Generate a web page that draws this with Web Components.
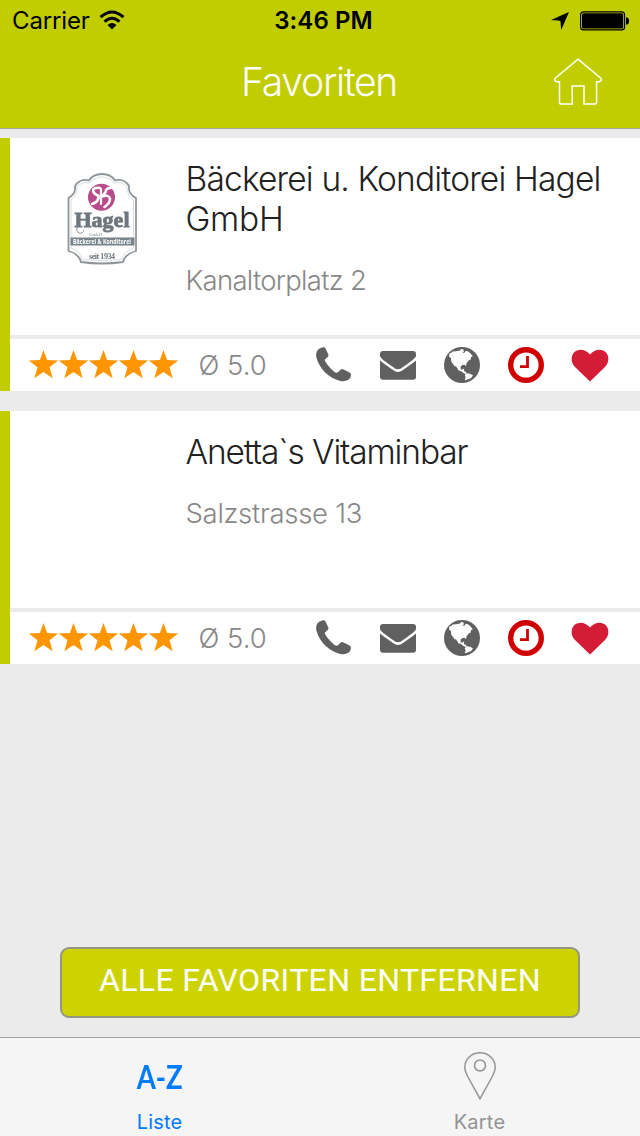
<!DOCTYPE html>
<html lang="de"><head><meta charset="utf-8"><title>Favoriten</title>
<style>body{margin:0;font-family:Inter,"Liberation Sans",sans-serif}</style></head>
<body>
<favorites-app>
  <status-bar slot="top"></status-bar>
  <nav-header slot="top">Favoriten</nav-header>
  <place-card rating="5.0"><bakery-logo slot="logo"></bakery-logo><span slot="name" style="letter-spacing:-.83px">Bäckerei u. Konditorei Hagel <span style="letter-spacing:-.3px">GmbH</span></span><span slot="street" style="letter-spacing:-.72px">Kanaltorplatz 2</span></place-card>
  <place-card rating="5.0"><span slot="name" style="letter-spacing:-1.12px">Anetta`s Vitaminbar</span><span slot="street" style="letter-spacing:-.3px">Salzstrasse 13</span></place-card>
  <clear-button slot="action">ALLE FAVORITEN ENTFERNEN</clear-button>
  <tab-bar slot="bottom"></tab-bar>
</favorites-app>
<script>
const define=(name,html,setup)=>customElements.define(name,class extends HTMLElement{
  constructor(){super();this.attachShadow({mode:'open'}).innerHTML=html;}
  connectedCallback(){if(setup)setup(this);}
});

define('app-icon',`<style>:host{display:block;width:36px;height:36px}svg{display:block;width:100%;height:100%;overflow:visible}</style><svg viewBox="0 0 36 36"></svg>`,el=>{
  const icons={
    phone:'<path fill="#606060" d="M3.1 1.7C4.7.7 7.6-.1 8.4.2 9.6.8 10.3 3.2 11.3 5.3 11.9 6.5 12.8 7.9 12.4 8.9 12 10.2 8.7 12 8.8 13.2 8.9 15 15.2 22.8 19.6 25.6 22.1 27 23.8 22.5 25.9 22.1 27 22 33.5 25.5 34.6 26.4 35.4 27.2 34.7 30.4 33.6 31.8 31.7 33.8 27.6 34.7 24.2 33.9 13 31.1 3.3 21.8.4 10.5-.4 6.8.8 3.1 3.1 1.7Z"/>',
    mail:'<path fill="#606060" d="M3 4H33Q36 4 36 7V9C36 11 30 15 23 20Q18 24.7 13 20C6 15 0 11 0 9V7Q0 4 3 4Z"/><path fill="#606060" d="M0 13.6Q1 14.8 13 23 18 27 23 23 35 14.8 36 13.6V29.7Q36 32.7 33 32.7H3Q0 32.7 0 29.7Z"/>',
    globe:'<circle cx="18" cy="18" r="18" fill="#606060"/><path fill="#fff" d="M5 9.5 5.4 6.4 7.5 5.7 8.5 4.6 12 4.2 16 3.6 16.8 2.3 19 2 20 4.2 18.6 5.4 20.2 6 21.8 3.8 24.4 4.6 27 7 28.8 9.3 26.6 10.6 27 12.3 25 13.2 22.6 16 22 19.2 20.8 17.8 18.5 18 16.6 19.6 16.8 22.4 18.6 22.6 20.2 21.2 19.9 24 22.2 25 22.4 27.4 19.5 26 17.2 24.2 14.2 23.2 13.4 21.2 11.5 18.7 11.2 20 9 17 7.2 14.6 7 11.3ZM21.6 27.2 23.2 26.2 26 26.8 29 28.3 27.2 31 23.6 32.6 20.8 33.2 21.6 30.3 20.8 28.6Z"/>',
    clock:'<circle cx="18" cy="18" r="15.3" fill="none" stroke="#d00000" stroke-width="5.4"/><path fill="none" stroke="#d00000" stroke-width="2.8" d="M19.5 9V19.6H12"/>',
    heart:'<path fill="#d41c37" d="M18 34.4 3 20C-1.2 16-1.4 9 2 5.5 6 1.4 13.5 2 18 7.6 22.5 2 30 1.4 34 5.5 37.4 9 37.2 16 33 20Z"/>',
    star:'<path fill="#ff9500" d="M15 0 18.6 10.1 29.7 10.5 21 17.2 24.2 28.2 15 21.9 5.8 28.2 9 17.2.3 10.5 11.4 10.1Z"/>'
  };
  const n=el.getAttribute('name');
  const svg=el.shadowRoot.querySelector('svg');
  svg.setAttribute('viewBox',n==='star'?'.5 0 30 30':'0 0 36 36');
  svg.innerHTML=icons[n];
});

define('status-bar',`<style>:host{display:grid;grid-template-columns:1fr auto 1fr;align-items:center;height:40px;padding:1px 10px 0 12px;font-size:24px;line-height:40px;box-sizing:border-box}
.l,.r{display:flex;align-items:center}.r{justify-content:flex-end}.l span{letter-spacing:-.15px}.t{font-weight:600;padding-left:5px;letter-spacing:.1px}.wifi{margin:-2px 0 0 9.5px}.batt{margin-left:11px}.r svg{margin-top:-1px}svg{display:block}</style>
<div class="l"><span>Carrier</span><svg class="wifi" width="26" height="20" viewBox="0 0 26 20"><g fill="none" stroke="#000" stroke-width="3"><path d="M1.5 7.2Q13-3.2 24.5 7.2"/><path d="M5.5 11.7Q13 4.8 20.5 11.7"/></g><path d="M8.5 15Q13 11 17.5 15L13 19.5Z"/></svg></div>
<div class="t">3:46 PM</div>
<div class="r"><svg width="18" height="18" viewBox="0 0 18 18"><path d="M18 0 10.2 18 9.4 8.8 0 7.9Z"/></svg><svg class="batt" width="50" height="20" viewBox="0 0 50 20"><rect x=".6" y=".9" width="44" height="18" rx="3" fill="none" stroke="#000" stroke-width="1.1"/><rect x="2" y="2.3" width="41.2" height="15.2" rx="1.6"/><path d="M46 6.5H47Q49 6.8 49 10T47 13.5H46Z"/></svg></div>`);

define('nav-header',`<style>:host{display:grid;grid-template-columns:90px 1fr 90px;align-items:center;height:88px;color:#fff;font-size:39px;font-weight:300}
.title{text-align:center;letter-spacing:-1.25px;padding:0 2px 5px 0}svg{display:block;margin:0 0 4px 4px}</style>
<span></span><div class="title"><slot></slot></div><svg width="48" height="48" viewBox="0 0 48 48" fill="none" stroke="#fff" stroke-width="1.5"><path d="M24 1.2 46.5 20Q48.7 22.8 45 23.8H42.6V44.2Q42.6 46 41 46H30V28H18.2V46H7.2Q5.5 46 5.5 44.2V23.8H3Q-.7 22.8 1.5 20Z"/></svg>`);

define('bakery-logo',`<style>:host{display:block;width:110px;height:120px}svg{display:block;filter:blur(.5px)}</style>
<svg width="110" height="120" viewBox="0 0 110 120"><path d="M25 26Q30 18 39 20.5 43 14 52 14 61 14 65 20.5 74 18 79 26 78 34 86 38V91Q75 94 73 102 63 103.5 52 103.5 41 103.5 31 102 29 94 18.5 91V38Q26 34 25 26Z" fill="#fff" stroke="#8f969a" stroke-width="1.8"/><path d="M27 27Q32 21 40 23 44 17 52 17 60 17 64 23 72 21 77 27 77 36 83.5 40V88Q74 91 72 99.5 52 102 32 99.5 30 91 21 88V40Q27 36 27 27Z" fill="none" stroke="#d9dcde"/>
<circle cx="51.5" cy="37.2" r="13.5" fill="#b84d8b"/><g fill="none" stroke="#fff" stroke-linecap="round"><path d="M50 28Q43 27 43 31 44 34 48.5 36 49 42 42 44" stroke-width="2.6"/><path d="M51 29V44" stroke-width="2.2"/><path d="M60.5 28Q56 28 55.5 32L52 36.5Q59 34 60 39 60 43 54.5 47" stroke-width="2.6"/></g>
<g font-family="Liberation Serif,serif" font-weight="700" fill="#6e777d"><text x="24.5" y="67.2" font-size="21" textLength="55" lengthAdjust="spacingAndGlyphs" stroke="#6e777d" stroke-width=".8">Hagel</text><text x="39" y="75.6" font-size="4.2" textLength="13" font-weight="400">GmbH</text><text x="39" y="99" font-size="8" textLength="26">seit 1934</text></g><path d="M28 66Q25 71 29 73 33 74 34 70" fill="none" stroke="#8c949a"/><rect x="20.5" y="77.5" width="64" height="8" fill="#77848b"/><text x="23" y="84" font-family="Open Sans,sans-serif" font-weight="700" font-size="6.3" fill="#fff" textLength="58" lengthAdjust="spacingAndGlyphs">Bäckerei &amp; Konditorei</text></svg>`);

define('place-card',`<style>:host{display:flex;flex-direction:column;height:253px;border-left:10px solid #c1cd00;background:#fff;box-sizing:border-box}
.info{display:grid;grid-template-columns:135.5px 1fr;height:197px;padding-left:40px;box-sizing:border-box}.logo{padding-top:22px}.copy{padding:21px 19px 0 0}
.name{font-size:33.5px;line-height:40px;font-weight:300;color:#222}.street{margin-top:24px;font-size:27.5px;line-height:34px;font-weight:300;color:#888}
.bar{display:flex;align-items:center;height:52px;border-top:4px solid #ebebeb;padding:0 32px 0 19px}.stars{display:flex}.stars app-icon{width:30px;height:30px}.avg{margin:-1px 0 0 19.5px;font-size:27.5px;font-weight:300;color:#888}.actions{display:flex;gap:28px;margin-left:auto}</style>
<div class="info"><div class="logo"><slot name="logo"></slot></div><div class="copy"><div class="name"><slot name="name"></slot></div><div class="street"><slot name="street"></slot></div></div></div>
<div class="bar"><div class="stars">${'<app-icon name="star"></app-icon>'.repeat(5)}</div><span class="avg"></span><div class="actions">${['phone','mail','globe','clock','heart'].map(n=>`<app-icon name="${n}"></app-icon>`).join('')}</div></div>`,el=>{el.shadowRoot.querySelector('.avg').textContent='Ø '+el.getAttribute('rating');});

define('clear-button',`<style>:host{display:block;padding:0 60px 19px}button{display:block;width:520px;height:71px;border:2px solid #959582;border-radius:9px;background:#ccd300;color:#fff;font:400 32px/62px Roboto,"Liberation Sans",sans-serif;letter-spacing:.36px;padding:0 0 5px;white-space:nowrap}</style><button><slot></slot></button>`);

define('tab-item',`<style>:host{display:flex;flex:1;flex-direction:column;align-items:center;color:var(--tab,#949494);font-size:20px}.icon{height:70px;display:flex;align-items:center}.label{line-height:28px;letter-spacing:.2px;padding-right:1px}</style><div class="icon"><slot name="icon"></slot></div><div class="label"><slot></slot></div>`);
define('tab-bar',`<style>:host{display:flex;height:98px;border-top:1px solid #a3a3a3;background:#f5f5f5}.az{font:700 32px/32px Lato,sans-serif;padding-top:7px;transform:scaleX(.86)}svg{display:block;margin-top:6px}</style>
<tab-item style="--tab:#007aff"><span class="az" slot="icon">A-Z</span>Liste</tab-item><tab-item><svg slot="icon" width="32" height="48" viewBox="0 0 32 48" fill="none" stroke="#949494" stroke-width="1.5"><path d="M16 46.8 4 25Q.8 19 .8 15.5A15.2 14.8 0 0 1 31.2 15.5Q31.2 19 28 25Z"/><circle cx="16" cy="13.5" r="5.5"/></svg>Karte</tab-item>`);

define('favorites-app',`<style>:host{display:flex;flex-direction:column;width:640px;height:1136px;background:#ebebeb;overflow:hidden}header{height:128px;background:#c1cd00;border-bottom:1px solid #a5a59c}main{display:flex;flex:1;flex-direction:column;gap:20px;padding-top:9px}</style><header><slot name="top"></slot></header><main><slot></slot></main><slot name="action"></slot><slot name="bottom"></slot>`);
</script></body></html>
